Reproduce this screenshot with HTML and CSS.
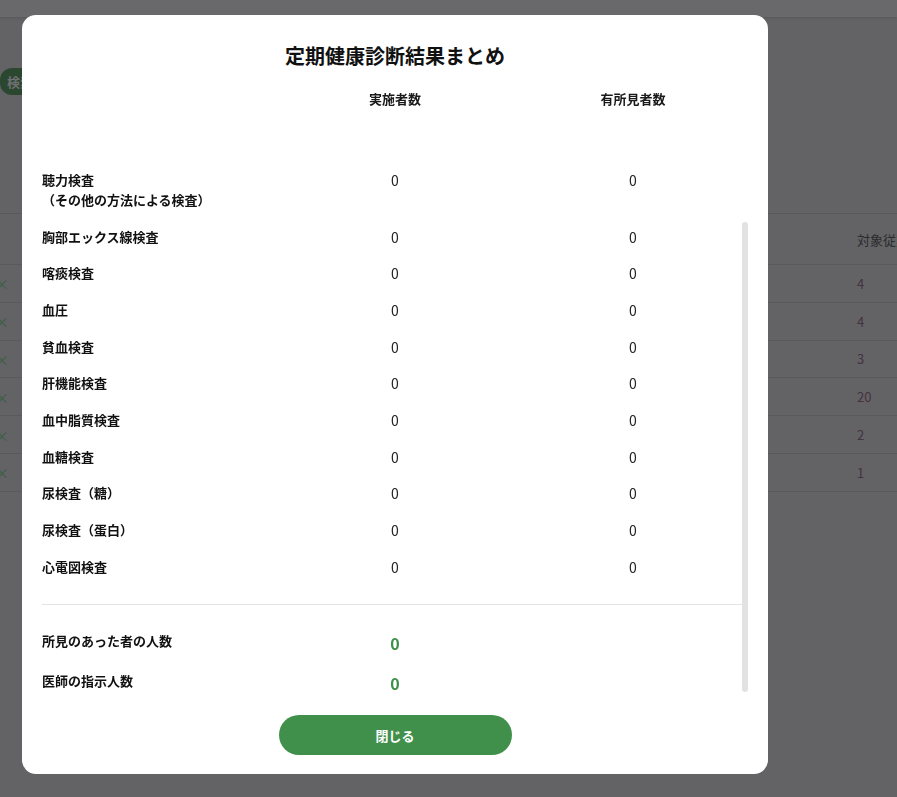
FILE: index.html
```html
<!DOCTYPE html>
<html lang="ja">
<head>
<meta charset="utf-8">
<title>定期健康診断結果まとめ</title>
<link rel="stylesheet" href="styles.css">
</head>
<body>
<div class="page">
  <header class="topbar"></header>
  <div class="search-row">
    <button class="search-btn">検索する</button>
  </div>
  <div class="bg-table">
    <div class="bg-row bg-head"><span class="bg-x"></span><span class="bg-val">対象従業員数</span></div>
    <div class="bg-row"><span class="bg-x">×</span><span class="bg-val">4</span></div>
    <div class="bg-row"><span class="bg-x">×</span><span class="bg-val">4</span></div>
    <div class="bg-row"><span class="bg-x">×</span><span class="bg-val">3</span></div>
    <div class="bg-row"><span class="bg-x">×</span><span class="bg-val">20</span></div>
    <div class="bg-row"><span class="bg-x">×</span><span class="bg-val">2</span></div>
    <div class="bg-row"><span class="bg-x">×</span><span class="bg-val">1</span></div>
  </div>
</div>

<div class="overlay">
  <div class="modal">
    <h1 class="modal-title">定期健康診断結果まとめ</h1>
    <div class="modal-body">
      <div class="grid head">
        <div></div>
        <div class="c">実施者数</div>
        <div class="c">有所見者数</div>
      </div>
      <div class="rows">
        <div class="grid row"><div class="lbl">聴力検査<br>（その他の方法による検査）</div><div class="c num">0</div><div class="c num">0</div></div>
        <div class="grid row"><div class="lbl">胸部エックス線検査</div><div class="c num">0</div><div class="c num">0</div></div>
        <div class="grid row"><div class="lbl">喀痰検査</div><div class="c num">0</div><div class="c num">0</div></div>
        <div class="grid row"><div class="lbl">血圧</div><div class="c num">0</div><div class="c num">0</div></div>
        <div class="grid row"><div class="lbl">貧血検査</div><div class="c num">0</div><div class="c num">0</div></div>
        <div class="grid row"><div class="lbl">肝機能検査</div><div class="c num">0</div><div class="c num">0</div></div>
        <div class="grid row"><div class="lbl">血中脂質検査</div><div class="c num">0</div><div class="c num">0</div></div>
        <div class="grid row"><div class="lbl">血糖検査</div><div class="c num">0</div><div class="c num">0</div></div>
        <div class="grid row"><div class="lbl">尿検査（糖）</div><div class="c num">0</div><div class="c num">0</div></div>
        <div class="grid row"><div class="lbl">尿検査（蛋白）</div><div class="c num">0</div><div class="c num">0</div></div>
        <div class="grid row"><div class="lbl">心電図検査</div><div class="c num">0</div><div class="c num">0</div></div>
      </div>
      <hr class="divider">
      <div class="grid sum"><div class="lbl">所見のあった者の人数</div><div class="c gnum">0</div><div></div></div>
      <div class="grid sum"><div class="lbl">医師の指示人数</div><div class="c gnum">0</div><div></div></div>
      <div class="scroll-thumb"></div>
    </div>
    <div class="modal-foot">
      <button class="close-btn">閉じる</button>
    </div>
  </div>
</div>
</body>
</html>
```

FILE: styles.css
```css
* { box-sizing: border-box; }
html, body { margin: 0; padding: 0; }
body {
  width: 897px;
  height: 797px;
  overflow: hidden;
  background: #636366;
  font-family: "Noto Sans CJK JP", "Noto Sans", sans-serif;
  color: #1a1a1a;
}

/* background page (already dimmed) */
.page { height: 797px; }
.topbar {
  height: 17px;
  background: #69696b;
  box-shadow: 0 1px 3px rgba(0,0,0,0.12);
}
.search-row { padding-top: 51px; height: 196px; }
.search-btn {
  display: block;
  height: 27px;
  border: 0;
  border-radius: 12px;
  background: #2b4730;
  color: #707073;
  font-family: inherit;
  font-size: 13px;
  font-weight: 700;
  padding: 0 20px 0 7px;
}
.bg-table {
  border-top: 1px solid #59595c;
  margin-left: -5px;
}
.bg-row {
  display: grid;
  grid-template-columns: 862px 1fr;
  align-items: center;
  height: 37.8px;
  border-bottom: 1px solid #59595c;
  font-size: 13px;
  white-space: nowrap;
  overflow: hidden;
}
.bg-head { height: 51px; color: #2c2b2e; }
.bg-x { color: #3a5f42; font-size: 14px; }
.bg-val { color: #43323f; }
.bg-head .bg-val { color: #2b2a2d; }

/* modal */
.overlay {
  position: fixed;
  inset: 0;
  padding: 15px 0 0 22px;
}
.modal {
  width: 746px;
  height: 759px;
  background: #fff;
  border-radius: 14px;
  display: flex;
  flex-direction: column;
  padding: 26px 0 19px 20px;
}
.modal-title {
  margin: 0;
  font-size: 20px;
  line-height: 30px;
  font-weight: 700;
  text-align: center;
  padding-right: 20px;
  color: #111;
}
.modal-body {
  position: relative;
  flex: 1;
  margin-top: 18px;
}
.grid {
  display: grid;
  grid-template-columns: 235px 236px 240px;
  align-items: start;
}
.head {
  font-size: 13px;
  font-weight: 700;
  line-height: 20px;
  padding-bottom: 52.7px;
}
.c { text-align: center; }
.row {
  padding: 8.33px 0;
  line-height: 20px;
}
.lbl {
  font-size: 13px;
  font-weight: 700;
  line-height: 20px;
  color: #111;
}
.num {
  font-size: 14px;
  line-height: 20px;
  color: #222;
}
.divider {
  margin: 19.5px 0 0 0;
  width: 706px;
  border: 0;
  border-top: 1px solid #e4e4e4;
  height: 0;
}
.divider + .sum { margin-top: 16px; }
.sum {
  height: 40px;
  padding: 10px 0;
}
.gnum {
  font-size: 16px;
  font-weight: 700;
  color: #3f8f4b;
  line-height: 20px;
  margin-top: 2px;
}
.scroll-thumb {
  position: absolute;
  left: 700px;
  top: 133px;
  width: 6px;
  height: 470px;
  border-radius: 3px;
  background: #e2e2e2;
}
.modal-foot {
  display: flex;
  justify-content: center;
  padding-right: 20px;
}
.close-btn {
  width: 233px;
  height: 40px;
  border: 0;
  border-radius: 20px;
  background: #40904c;
  color: #fff;
  font-family: inherit;
  font-size: 13px;
  font-weight: 700;
}
```
